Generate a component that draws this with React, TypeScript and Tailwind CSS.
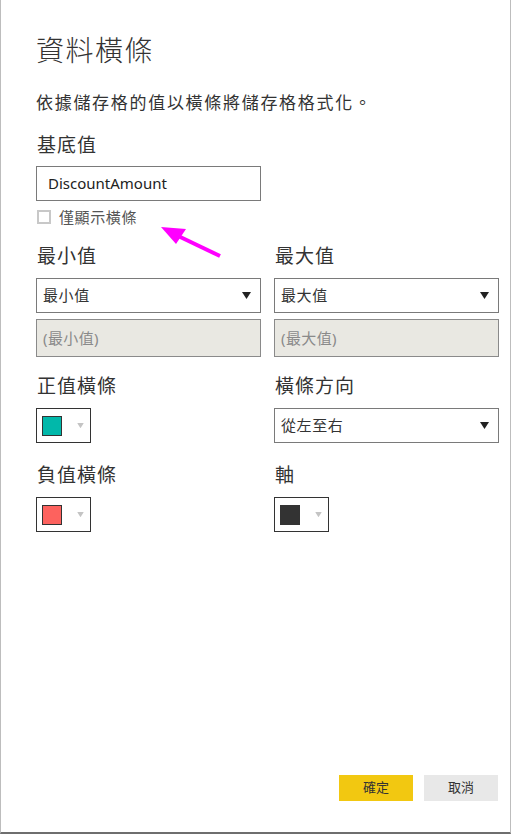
import React from 'react'

const font = { fontFamily: '"Noto Sans", "Noto Sans CJK TC", sans-serif' }

function Caret({ className = '' }: { className?: string }) {
	return (
		<svg width="9" height="7" viewBox="0 0 9 7" className={className}>
			<path d="M0 0 L9 0 L4.5 7 Z" fill="currentColor" />
		</svg>
	)
}

function SelectBox({ value }: { value: string }) {
	return (
		<div className="flex h-[35px] items-center justify-between border border-[#7a7a7a] bg-white pl-[6px] pr-[9px]">
			<span className="text-[15px] tracking-[0.6px] text-[#333]">{value}</span>
			<Caret className="text-[#222]" />
		</div>
	)
}

function DisabledBox({ value }: { value: string }) {
	return (
		<div className="mt-[6px] flex h-[38px] items-center border border-[#8a8a8a] bg-[#e9e8e2] pl-[6px]">
			<span className="text-[15px] tracking-[0.4px] text-[#8a8a8a]">{value}</span>
		</div>
	)
}

function ColorPicker({ color }: { color: string }) {
	return (
		<div className="flex h-[35px] w-[55px] items-center border border-[#333] bg-white pl-[5px]">
			<div className="h-[20px] w-[20px] border border-[#333]" style={{ backgroundColor: color }} />
			<Caret className="ml-[14px] scale-75 text-[#c4c4c4]" />
		</div>
	)
}

function Label({ children }: { children: React.ReactNode }) {
	return <div className="mb-[10px] pl-[1px] text-[19px] leading-[24px] tracking-[1px] text-[#333]">{children}</div>
}

export default function App() {
	return (
		<div style={font} className="relative h-[834px] w-[511px] border-x border-[#bdbdbd] border-b-2 border-b-[#6e6e6e] bg-white">
			<div className="flex h-full flex-col pl-[35px] pr-[12px] pt-[32px]">
				<h1 className="text-[28px] font-light leading-[36px] tracking-[1.5px] text-[#333]">資料橫條</h1>
				<p className="mt-[24px] text-[17px] leading-[22px] tracking-[1.7px] text-[#333]">依據儲存格的值以橫條將儲存格格式化。</p>

				<div className="mt-[19px] pl-[1px] text-[19px] leading-[24px] tracking-[1px] text-[#333]">基底值</div>
				<div className="mt-[9px] flex h-[35px] w-[225px] items-center border border-[#7a7a7a] pl-[11px] text-[15px] text-[#222]">
					DiscountAmount
				</div>
				<div className="mt-[6px] flex h-[20px] items-center gap-[8px] pl-[1px]">
					<div className="h-[14px] w-[14px] border-2 border-[#c8c8c8] bg-white" />
					<span className="text-[15px] tracking-[0.6px] text-[#555]">僅顯示橫條</span>
				</div>

				<div className="mt-[17px] grid grid-cols-[225px_225px] gap-x-[13px]">
					<div>
						<Label>最小值</Label>
						<SelectBox value="最小值" />
						<DisabledBox value="(最小值)" />
					</div>
					<div>
						<Label>最大值</Label>
						<SelectBox value="最大值" />
						<DisabledBox value="(最大值)" />
					</div>

					<div className="mt-[17px]">
						<Label>正值橫條</Label>
						<ColorPicker color="#01b8aa" />
					</div>
					<div className="mt-[17px]">
						<Label>橫條方向</Label>
						<SelectBox value="從左至右" />
					</div>

					<div className="mt-[20px]">
						<Label>負值橫條</Label>
						<ColorPicker color="#fd625e" />
					</div>
					<div className="mt-[20px]">
						<Label>軸</Label>
						<ColorPicker color="#333333" />
					</div>
				</div>

				<div className="mt-auto mb-[31px] flex justify-end gap-[11px]">
					<button className="h-[26px] w-[74px] bg-[#f2c811] text-[13px] text-[#333]">確定</button>
					<button className="h-[26px] w-[74px] bg-[#e8e8e8] text-[13px] text-[#333]">取消</button>
				</div>
			</div>

			<svg className="absolute left-[155px] top-[222px]" width="70" height="40" viewBox="0 0 70 40">
				<line x1="64" y1="34" x2="18" y2="12" stroke="#ff00ff" strokeWidth="4" />
				<path d="M5 5 L30 7 L20 22 Z" fill="#ff00ff" />
			</svg>
		</div>
	)
}
